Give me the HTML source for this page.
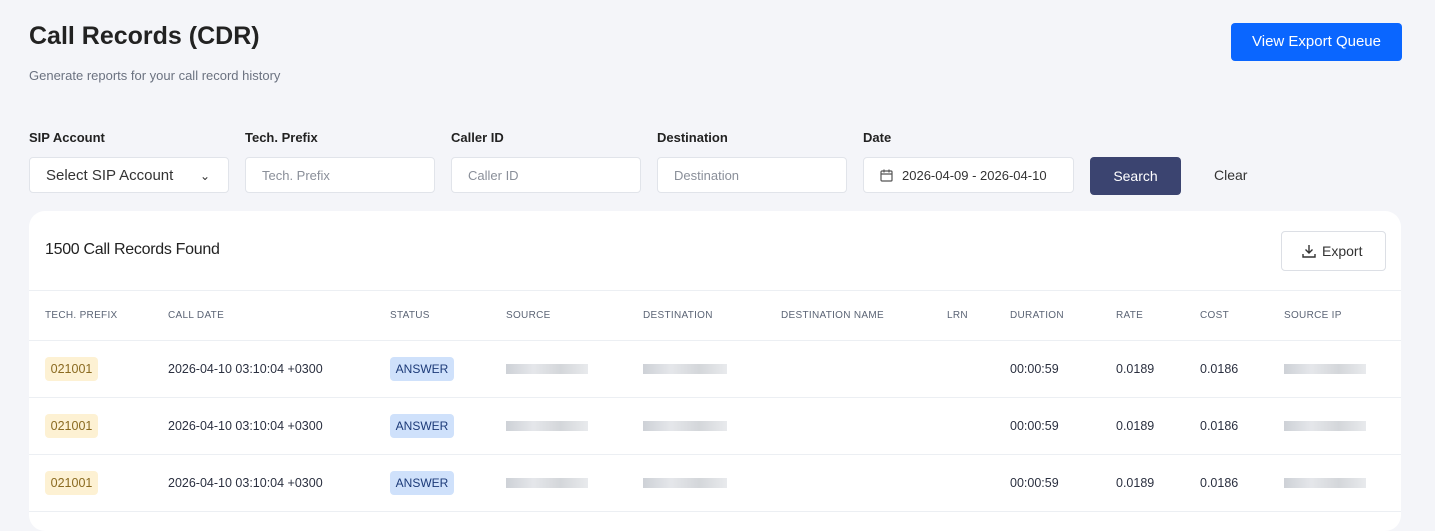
<!DOCTYPE html><html><head><style>
body{margin:0;width:1435px;height:517px;background:#f4f5f9;font-family:"Liberation Sans",sans-serif;position:relative;overflow:hidden;color:#1f2433}
.a{position:absolute}
h1{position:absolute;left:29px;top:22px;margin:0;font-size:25px;font-weight:bold;color:#222}
.sub{left:29px;top:68px;font-size:13px;color:#6b7280}
.btn{left:1231px;top:23px;width:171px;height:38px;background:#0a66ff;color:#fff;border-radius:4px;font-size:15px;text-align:center;line-height:38px}
.lbl{top:130px;font-size:13px;font-weight:bold;color:#222}
.inp{top:157px;height:36px;background:#fff;border:1px solid #e1e4ea;border-radius:4px;font-size:13px;color:#8a8f99;line-height:36px;padding-left:16px;box-sizing:border-box}
.card{left:29px;top:211px;width:1372px;height:320px;background:#fff;border-radius:16px}
.th{top:310px;font-size:10px;color:#5b6475;letter-spacing:.3px}
.line{left:29px;width:1372px;height:1px;background:#eceff3}
.td{font-size:12.5px;color:#2b3040}
.pf{left:45px;width:53px;height:24px;background:#fdf1d3;color:#8a6a20;border-radius:4px;font-size:12.5px;text-align:center;line-height:24px}
.st{left:390px;width:64px;height:24px;background:#cfe1fb;color:#1c3a78;border-radius:4px;font-size:12px;text-align:center;line-height:24px}
.bl{height:10px;background:linear-gradient(90deg,#c8ccd2,#e2e4e8,#cfd2d6,#e6e8eb);opacity:.9}
</style></head><body>
<h1>Call Records (CDR)</h1>
<div class="a sub">Generate reports for your call record history</div>
<div class="a btn">View Export Queue</div>
<div class="a lbl" style="left:29px">SIP Account</div>
<div class="a lbl" style="left:245px">Tech. Prefix</div>
<div class="a lbl" style="left:451px">Caller ID</div>
<div class="a lbl" style="left:657px">Destination</div>
<div class="a lbl" style="left:863px">Date</div>
<div class="a inp" style="left:29px;width:200px;font-size:15px;color:#333">Select SIP Account<span style="position:absolute;right:18px;top:0;font-size:12px">&#8964;</span></div>
<div class="a inp" style="left:245px;width:190px">Tech. Prefix</div>
<div class="a inp" style="left:451px;width:190px">Caller ID</div>
<div class="a inp" style="left:657px;width:190px">Destination</div>
<div class="a inp" style="left:863px;width:211px;color:#333;padding-left:38px"><svg class="a" style="left:16px;top:11px" width="13" height="13" viewBox="0 0 13 13" fill="none" stroke="#555" stroke-width="1.2"><rect x="1" y="2" width="11" height="10" rx="1"/><path d="M1 5h11M4 0.5v3M9 0.5v3"/></svg>2026-04-09 - 2026-04-10</div>
<div class="a" style="left:1090px;top:157px;width:91px;height:38px;background:#3b4470;color:#fff;border-radius:4px;text-align:center;line-height:38px;font-size:14px">Search</div>
<div class="a" style="left:1214px;top:167px;font-size:14px;color:#333">Clear</div>
<div class="a card"></div>
<div class="a" style="left:45px;top:241px;font-size:16px;color:#222;letter-spacing:-.3px">1500 Call Records Found</div>
<div class="a" style="left:1281px;top:231px;width:103px;height:38px;border:1px solid #dcdfe5;border-radius:4px;background:#fff;font-size:14px;line-height:38px;color:#333"><svg class="a" style="left:20px;top:12px" width="14" height="14" viewBox="0 0 14 14" fill="none" stroke="#333" stroke-width="1.4"><path d="M7 1v8M3.5 5.5L7 9l3.5-3.5M1 10v3h12v-3"/></svg><span style="position:absolute;left:40px">Export</span></div>
<div class="a line" style="top:290px"></div>
<div class="a th" style="left:45px">TECH. PREFIX</div><div class="a th" style="left:168px">CALL DATE</div><div class="a th" style="left:390px">STATUS</div><div class="a th" style="left:506px">SOURCE</div><div class="a th" style="left:643px">DESTINATION</div><div class="a th" style="left:781px">DESTINATION NAME</div><div class="a th" style="left:947px">LRN</div><div class="a th" style="left:1010px">DURATION</div><div class="a th" style="left:1116px">RATE</div><div class="a th" style="left:1200px">COST</div><div class="a th" style="left:1284px">SOURCE IP</div>
<div class="a line" style="top:340px"></div><div class="a line" style="top:397px"></div><div class="a line" style="top:454px"></div><div class="a line" style="top:511px"></div>
<div class="a pf" style="top:357px">021001</div><div class="a td" style="left:168px;top:362px">2026-04-10 03:10:04 +0300</div><div class="a st" style="top:357px">ANSWER</div><div class="a bl" style="left:506px;top:364px;width:82px"></div><div class="a bl" style="left:643px;top:364px;width:84px"></div><div class="a td" style="left:1010px;top:362px">00:00:59</div><div class="a td" style="left:1116px;top:362px">0.0189</div><div class="a td" style="left:1200px;top:362px">0.0186</div><div class="a bl" style="left:1284px;top:364px;width:82px"></div>
<div class="a pf" style="top:414px">021001</div><div class="a td" style="left:168px;top:419px">2026-04-10 03:10:04 +0300</div><div class="a st" style="top:414px">ANSWER</div><div class="a bl" style="left:506px;top:421px;width:82px"></div><div class="a bl" style="left:643px;top:421px;width:84px"></div><div class="a td" style="left:1010px;top:419px">00:00:59</div><div class="a td" style="left:1116px;top:419px">0.0189</div><div class="a td" style="left:1200px;top:419px">0.0186</div><div class="a bl" style="left:1284px;top:421px;width:82px"></div>
<div class="a pf" style="top:471px">021001</div><div class="a td" style="left:168px;top:476px">2026-04-10 03:10:04 +0300</div><div class="a st" style="top:471px">ANSWER</div><div class="a bl" style="left:506px;top:478px;width:82px"></div><div class="a bl" style="left:643px;top:478px;width:84px"></div><div class="a td" style="left:1010px;top:476px">00:00:59</div><div class="a td" style="left:1116px;top:476px">0.0189</div><div class="a td" style="left:1200px;top:476px">0.0186</div><div class="a bl" style="left:1284px;top:478px;width:82px"></div>
</body></html>
